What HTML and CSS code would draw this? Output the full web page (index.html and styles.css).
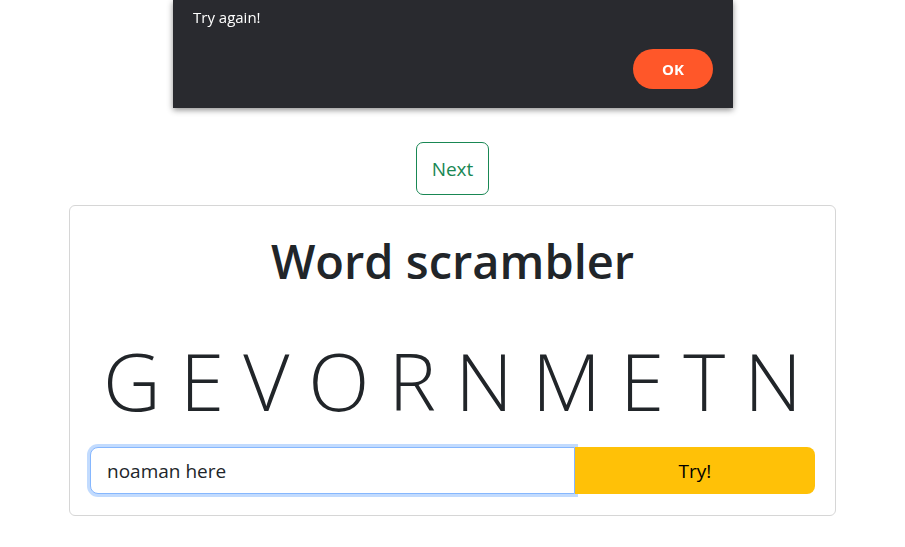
FILE: index.html
```html
<!DOCTYPE html>
<html lang="en">
<head>
<meta charset="utf-8">
<title>Word scrambler</title>
<link rel="stylesheet" href="styles.css">
</head>
<body>
<div class="dialog">
  <p class="dialog-text">Try again!</p>
  <div class="dialog-actions">
    <button class="dialog-ok">OK</button>
  </div>
</div>
<main class="page">
  <div class="next-wrap">
    <button class="btn-next">Next</button>
  </div>
  <section class="card">
    <h1 class="title">Word scrambler</h1>
    <div class="letters">
      <span>G</span><span>E</span><span>V</span><span>O</span><span>R</span><span>N</span><span>M</span><span>E</span><span>T</span><span>N</span>
    </div>
    <div class="input-group">
      <input class="guess" type="text" value="noaman here">
      <button class="btn-try">Try!</button>
    </div>
  </section>
</main>
</body>
</html>
```
FILE: styles.css
```css
* { box-sizing: border-box; }
body {
  margin: 0;
  font-family: "Open Sans", "Noto Sans", sans-serif;
  color: #212529;
  background: #fff;
}
.page {
  padding-top: 142px;
}
.next-wrap {
  display: flex;
  justify-content: center;
}
.btn-next {
  font-family: inherit;
  font-size: 19px;
  line-height: 30px;
  height: 53px;
  color: #198754;
  background: #fff;
  border: 1px solid #198754;
  border-radius: 7px;
  padding: 0 15px;
}
.card {
  width: 767px;
  margin: 10px auto 0;
  border: 1px solid #d6d6d6;
  border-radius: 6px;
  padding: 20px 20px 21px;
}
.title {
  margin: 0;
  text-align: center;
  font-size: 47px;
  font-weight: 600;
  line-height: 70px;
  color: #212529;
}
.letters {
  display: flex;
  justify-content: space-between;
  padding: 0 13px;
  margin-top: 34px;
  font-size: 80px;
  font-weight: 300;
  line-height: 100px;
  color: #212529;
}
.input-group {
  display: flex;
  margin-top: 17px;
  height: 47px;
}
.guess {
  flex: 0 0 485px;
  min-width: 0;
  font-family: inherit;
  font-size: 19px;
  color: #212529;
  padding: 0 16px;
  border: 1px solid #86b7fe;
  border-radius: 8px 0 0 8px;
  box-shadow: 0 0 0 3px rgba(13, 110, 253, 0.25);
  outline: none;
}
.btn-try {
  flex: 1 1 0;
  position: relative;
  font-family: inherit;
  font-size: 19px;
  color: #000;
  background: #ffc107;
  border: 0;
  border-radius: 0 8px 8px 0;
}
.dialog {
  position: fixed;
  top: 0;
  left: 173px;
  width: 560px;
  height: 108px;
  background: #292a2f;
  box-shadow: 0 2px 6px rgba(0, 0, 0, 0.45);
  padding: 0 20px;
  z-index: 10;
}
.dialog-text {
  margin: 0;
  padding-top: 6px;
  font-size: 15px;
  line-height: 22px;
  color: #fff;
}
.dialog-actions {
  display: flex;
  justify-content: flex-end;
  margin-top: 21px;
}
.dialog-ok {
  width: 80px;
  height: 40px;
  border: 0;
  border-radius: 20px;
  background: #ff5729;
  color: #fff;
  font-family: inherit;
  font-weight: 700;
  font-size: 15px;
}
```
